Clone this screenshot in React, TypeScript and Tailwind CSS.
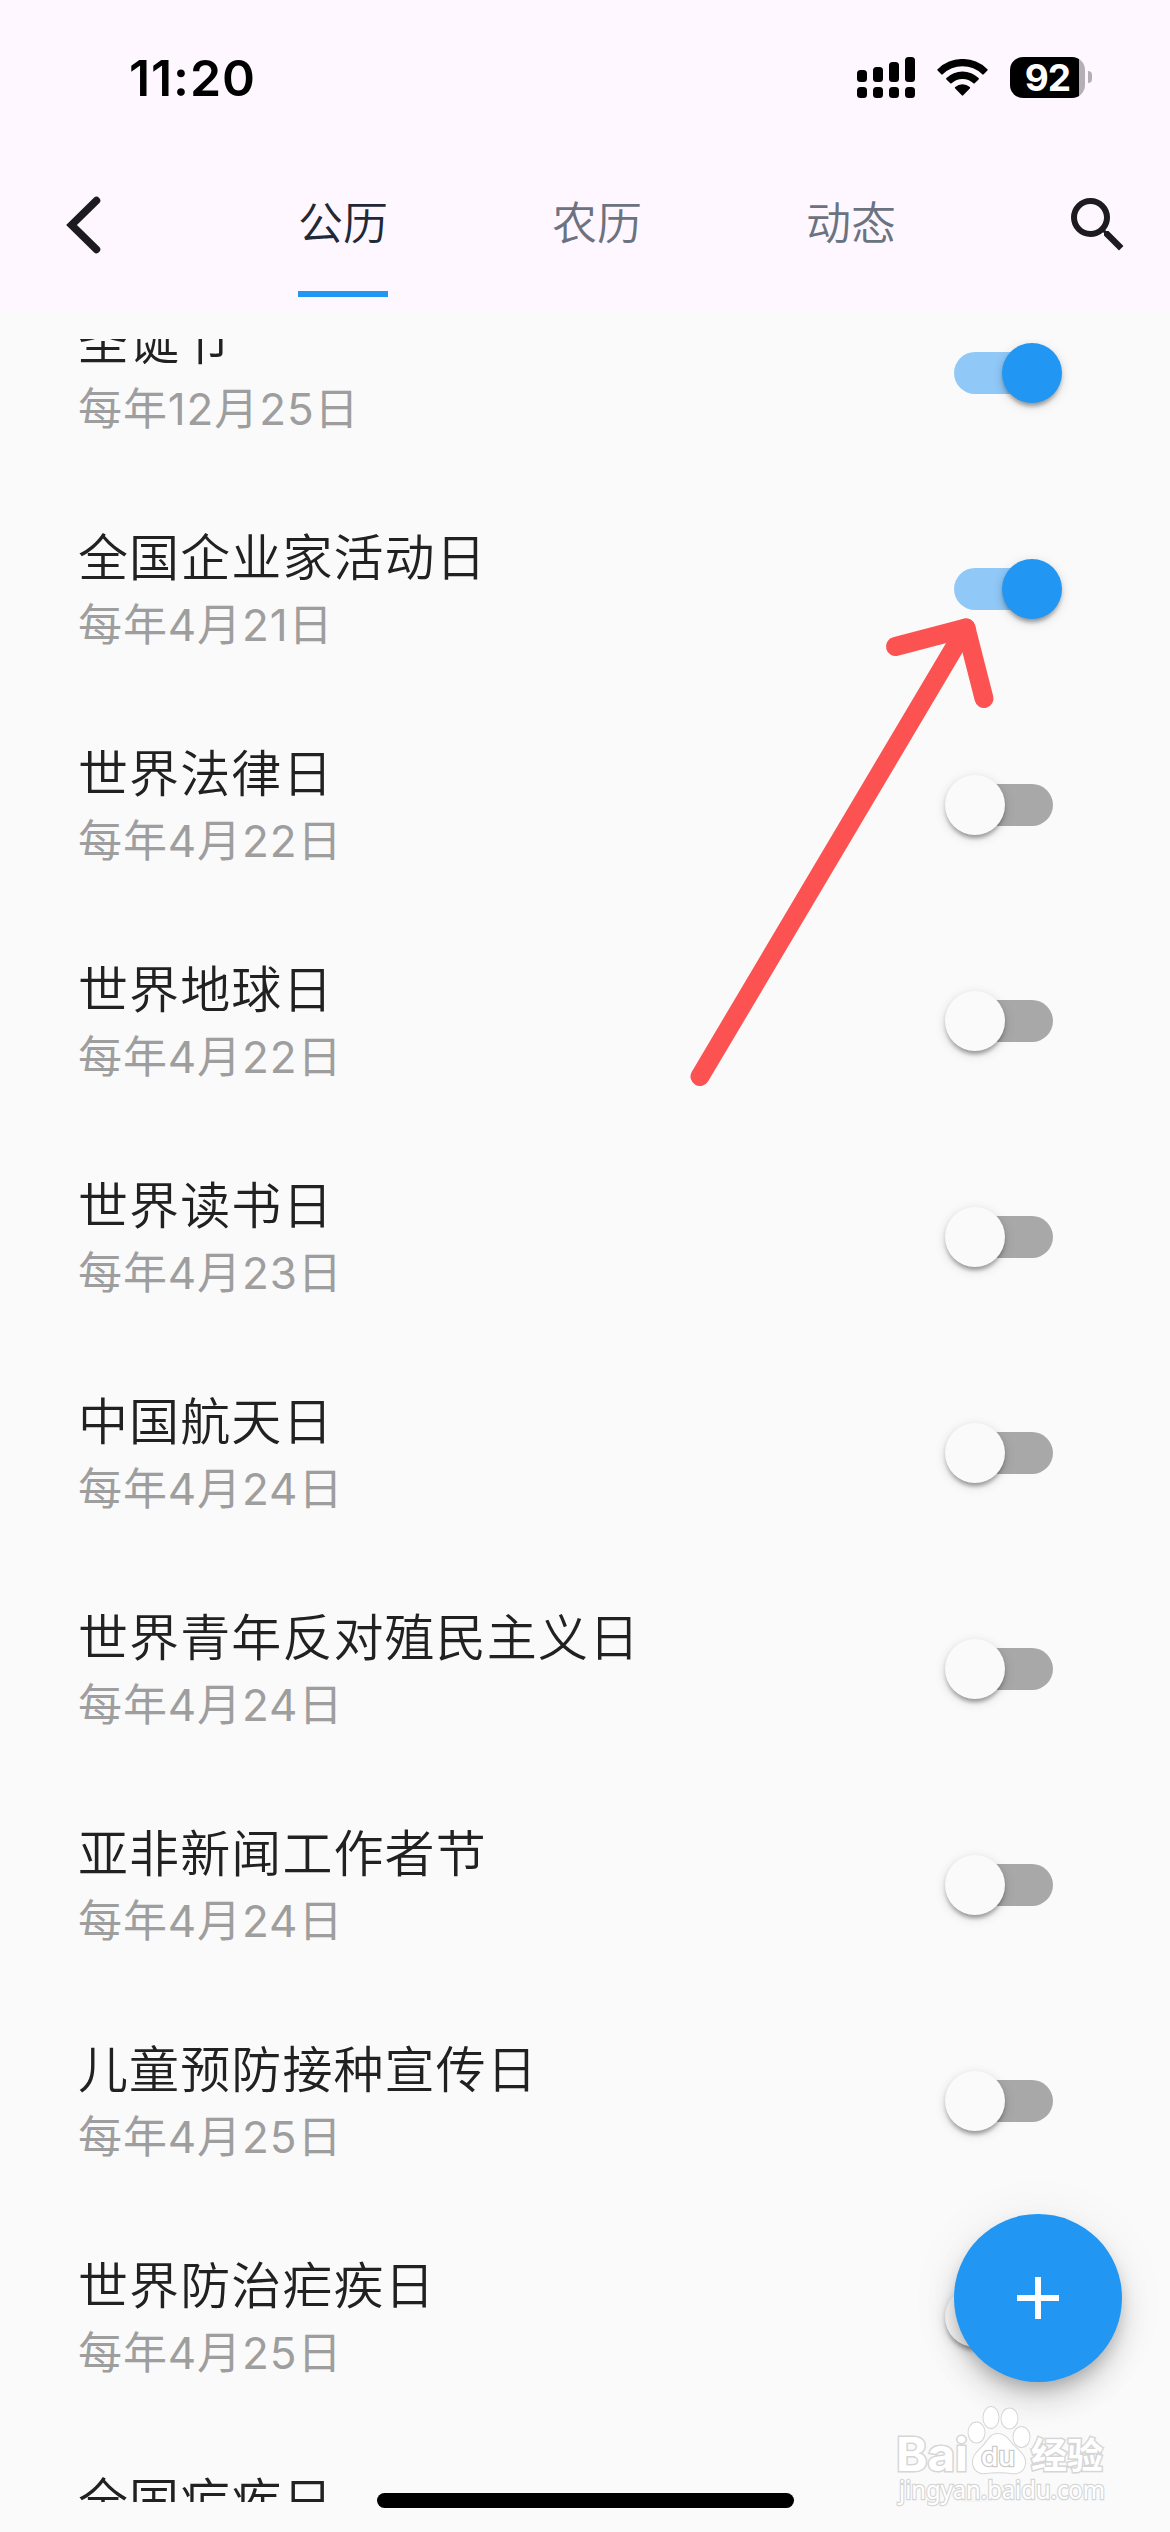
import React from 'react';

interface IFestival {
  title: string;
  date: string;
  enabled?: boolean;
}

const tabs: string[] = ['公历', '农历', '动态'];

const festivals: IFestival[] = [
  { title: '圣诞节', date: '每年12月25日', enabled: true },
  { title: '全国企业家活动日', date: '每年4月21日', enabled: true },
  { title: '世界法律日', date: '每年4月22日' },
  { title: '世界地球日', date: '每年4月22日' },
  { title: '世界读书日', date: '每年4月23日' },
  { title: '中国航天日', date: '每年4月24日' },
  { title: '世界青年反对殖民主义日', date: '每年4月24日' },
  { title: '亚非新闻工作者节', date: '每年4月24日' },
  { title: '儿童预防接种宣传日', date: '每年4月25日' },
  { title: '世界防治疟疾日', date: '每年4月25日' },
  { title: '全国疟疾日', date: '每年4月25日' },
];

function StatusBar() {
  return (
    <div className="flex h-[141px] items-start justify-between pl-[129px] pr-[78px] pt-[57px]">
      <span className="text-[50px] font-semibold leading-[42px] tracking-[0.9px] text-black">
        11:20
      </span>
      <div className="flex items-start">
        <svg className="h-[41px] w-[58px]" viewBox="0 0 58 41">
          <rect x="0" y="13" width="10" height="12" rx="3.5" />
          <rect x="16" y="10" width="10" height="15" rx="3.5" />
          <rect x="32" y="5" width="10" height="20" rx="3.5" />
          <rect x="48" y="0" width="10" height="25" rx="3.5" />
          <rect x="0" y="30" width="10" height="11" rx="3.5" />
          <rect x="16" y="30" width="10" height="11" rx="3.5" />
          <rect x="32" y="30" width="10" height="11" rx="3.5" />
          <rect x="48" y="30" width="10" height="11" rx="3.5" />
        </svg>
        <svg className="ml-[22px] mt-[2px] h-[37px] w-[51px]" viewBox="0 0 51 37">
          <path d="M.6 10.2a35.4 35.4 0 0 1 49.8 0 .9.9 0 0 1 0 1.3l-3.7 3.8a1 1 0 0 1-1.4 0 28.4 28.4 0 0 0-39.6 0 1 1 0 0 1-1.4 0L.6 11.5a.9.9 0 0 1 0-1.3z" />
          <path d="M9.4 19.1a23.1 23.1 0 0 1 32.2 0 .9.9 0 0 1 0 1.3l-3.9 3.9a1 1 0 0 1-1.3 0 15.9 15.9 0 0 0-21.8 0 1 1 0 0 1-1.3 0l-3.9-3.9a.9.9 0 0 1 0-1.3z" />
          <path d="M18.2 28.1a11 11 0 0 1 14.6 0 .9.9 0 0 1 0 1.4l-6.6 6.8a1 1 0 0 1-1.4 0l-6.6-6.8a.9.9 0 0 1 0-1.4z" />
        </svg>
        <div className="ml-[22px] flex h-[41px] w-[75px] items-center justify-center rounded-[13px] bg-[linear-gradient(90deg,#000_69px,#b5aeb6_69px)] text-[37px] font-bold leading-[41px] tracking-[-1px] text-white">
          92
        </div>
        <div className="ml-[3px] mt-[14px] h-[12px] w-[4px] rounded-r-full bg-[#b5aeb6]" />
      </div>
    </div>
  );
}

function TabBar() {
  return (
    <div className="flex h-[168px] items-start">
      <div className="flex h-[168px] w-[216px] items-center pl-[66px]">
        <svg className="h-[60px] w-[36px]" viewBox="0 0 36 60" fill="none">
          <path
            d="M30.5 5.5 5.5 30l25 24.5"
            stroke="#1d1b20"
            strokeWidth="7.5"
            strokeLinecap="round"
            strokeLinejoin="miter"
          />
        </svg>
      </div>
      {tabs.map((tab, index) => (
        <div key={tab} className="flex w-[254px] flex-col items-center">
          <span
            className={
              index === 0
                ? 'flex h-[150px] items-center pt-[15px] text-[45px] font-[350] leading-none text-[#1f2937]'
                : 'flex h-[150px] items-center pt-[15px] text-[45px] font-[350] leading-none text-[#6b7280]'
            }
          >
            {tab}
          </span>
          {index === 0 && <span className="h-[6px] w-[90px] bg-[#2196f3]" />}
        </div>
      ))}
      <svg className="ml-[84px] mt-[48px] h-[72px] w-[72px]" viewBox="0 0 24 24" fill="#1d1b20">
        <path d="M15.5 14h-.79l-.28-.27A6.471 6.471 0 0 0 16 9.5 6.5 6.5 0 1 0 9.5 16c1.61 0 3.09-.59 4.23-1.57l.27.28v.79l5 4.99L20.49 19l-4.99-5zm-6 0C7.01 14 5 11.99 5 9.5S7.01 5 9.5 5 14 7.01 14 9.5 11.99 14 9.5 14z" />
      </svg>
    </div>
  );
}

function Toggle({ enabled }: { enabled?: boolean }) {
  return (
    <div
      className={
        enabled
          ? 'flex h-[42px] w-[99px] items-center justify-end rounded-full bg-[#90c8f7]'
          : 'flex h-[42px] w-[99px] items-center justify-start rounded-full bg-[#a8a8a8]'
      }
    >
      <span
        className={
          enabled
            ? '-mr-[9px] size-[60px] rounded-full bg-[#2196f3] shadow-[0_6px_4px_-3px_rgba(0,0,0,0.2),0_3px_4px_rgba(0,0,0,0.16),0_3px_12px_rgba(0,0,0,0.14)]'
            : '-ml-[9px] size-[60px] rounded-full bg-[#fafafa] shadow-[0_6px_4px_-3px_rgba(0,0,0,0.2),0_3px_4px_rgba(0,0,0,0.16),0_3px_12px_rgba(0,0,0,0.14)]'
        }
      />
    </div>
  );
}

function FestivalRow({ title, date, enabled }: IFestival) {
  return (
    <div className="flex h-[216px] shrink-0 items-center justify-between pl-[78px] pr-[117px]">
      <div className="flex flex-col pt-[3px]">
        <span className="h-[69px] text-[50px] font-[350] leading-[70px] tracking-[1.1px] text-[#212121]">
          {title}
        </span>
        <span className="h-[67px] text-[44px] font-[390] leading-[66px] tracking-[0.9px] text-[#9e9e9e]">
          {date}
        </span>
      </div>
      <Toggle enabled={enabled} />
    </div>
  );
}

function PointerArrow() {
  return (
    <svg
      className="absolute left-[680px] top-[610px] h-[490px] w-[330px]"
      viewBox="680 610 330 490"
      fill="none"
      stroke="#fc5252"
      strokeWidth="19"
      strokeLinecap="round"
      strokeLinejoin="round"
    >
      <path d="M700 1076.5 966 628" />
      <path d="M895.5 646.5 966 628l18 70.5" />
    </svg>
  );
}

function Watermark() {
  return (
    <svg
      className="absolute left-[890px] top-[2400px] h-[110px] w-[230px]"
      viewBox="890 2400 230 110"
      fill="#fff"
      stroke="#d6d6d6"
      strokeWidth="2"
      paintOrder="stroke"
    >
      <text
        x="896"
        y="2471"
        fontSize="46"
        fontWeight="700"
        strokeWidth="3"
        textLength="72"
        lengthAdjust="spacingAndGlyphs"
      >
        Bai
      </text>
      <ellipse cx="976.5" cy="2432.5" rx="8" ry="10" />
      <ellipse cx="991" cy="2417.5" rx="7.5" ry="10.5" />
      <ellipse cx="1009.5" cy="2418.5" rx="8" ry="10" />
      <ellipse cx="1021.5" cy="2437" rx="8" ry="10" />
      <path d="M998 2434c8 0 11 7 16 12 6 6 12 10 11 18-1 8-8 10-14 9-5-1-20-1-25 0-7 1-13-3-13-11 0-8 7-12 12-18 4-5 6-10 13-10z" />
      <text
        x="981"
        y="2466"
        fontSize="26"
        fontWeight="500"
        textLength="34"
        lengthAdjust="spacingAndGlyphs"
        stroke="#cccccc"
        strokeWidth="2.5"
      >
        du
      </text>
      <text
        x="1031"
        y="2469"
        fontSize="36"
        fontWeight="700"
        textLength="72"
        strokeWidth="3"
      >
        经验
      </text>
      <text
        x="899"
        y="2499"
        className="font-['Noto_Sans',sans-serif]"
        fontSize="25"
        textLength="206"
        lengthAdjust="spacingAndGlyphs"
        strokeWidth="2.5"
      >
        jingyan.baidu.com
      </text>
    </svg>
  );
}

export default function App() {
  return (
    <div className="relative flex h-[2532px] w-[1170px] flex-col overflow-hidden bg-[#fafafa] font-['Inter','Noto_Sans_CJK_SC',sans-serif]">
      <header className="h-[309px] shrink-0 bg-[#fef7ff]">
        <StatusBar />
        <TabBar />
      </header>

      <main className="mt-[30px] h-[2163px] shrink-0 overflow-hidden">
        <div className="-mt-[74px] flex flex-col">
          {festivals.map((festival) => (
            <FestivalRow key={festival.title} {...festival} />
          ))}
        </div>
      </main>

      <PointerArrow />

      <button className="absolute left-[954px] top-[2214px] flex size-[168px] items-center justify-center rounded-full bg-[#2196f3] shadow-[0_9px_15px_-3px_rgba(0,0,0,0.2),0_18px_30px_rgba(0,0,0,0.14),0_3px_54px_rgba(0,0,0,0.06)]">
        <svg className="size-[42px]" viewBox="0 0 42 42" fill="#fff">
          <path d="M18 0h6v18h18v6H24v18h-6V24H0v-6h18z" />
        </svg>
      </button>

      <Watermark />

      <div className="absolute left-[377px] top-[2493px] h-[15px] w-[417px] rounded-full bg-black" />
    </div>
  );
}
